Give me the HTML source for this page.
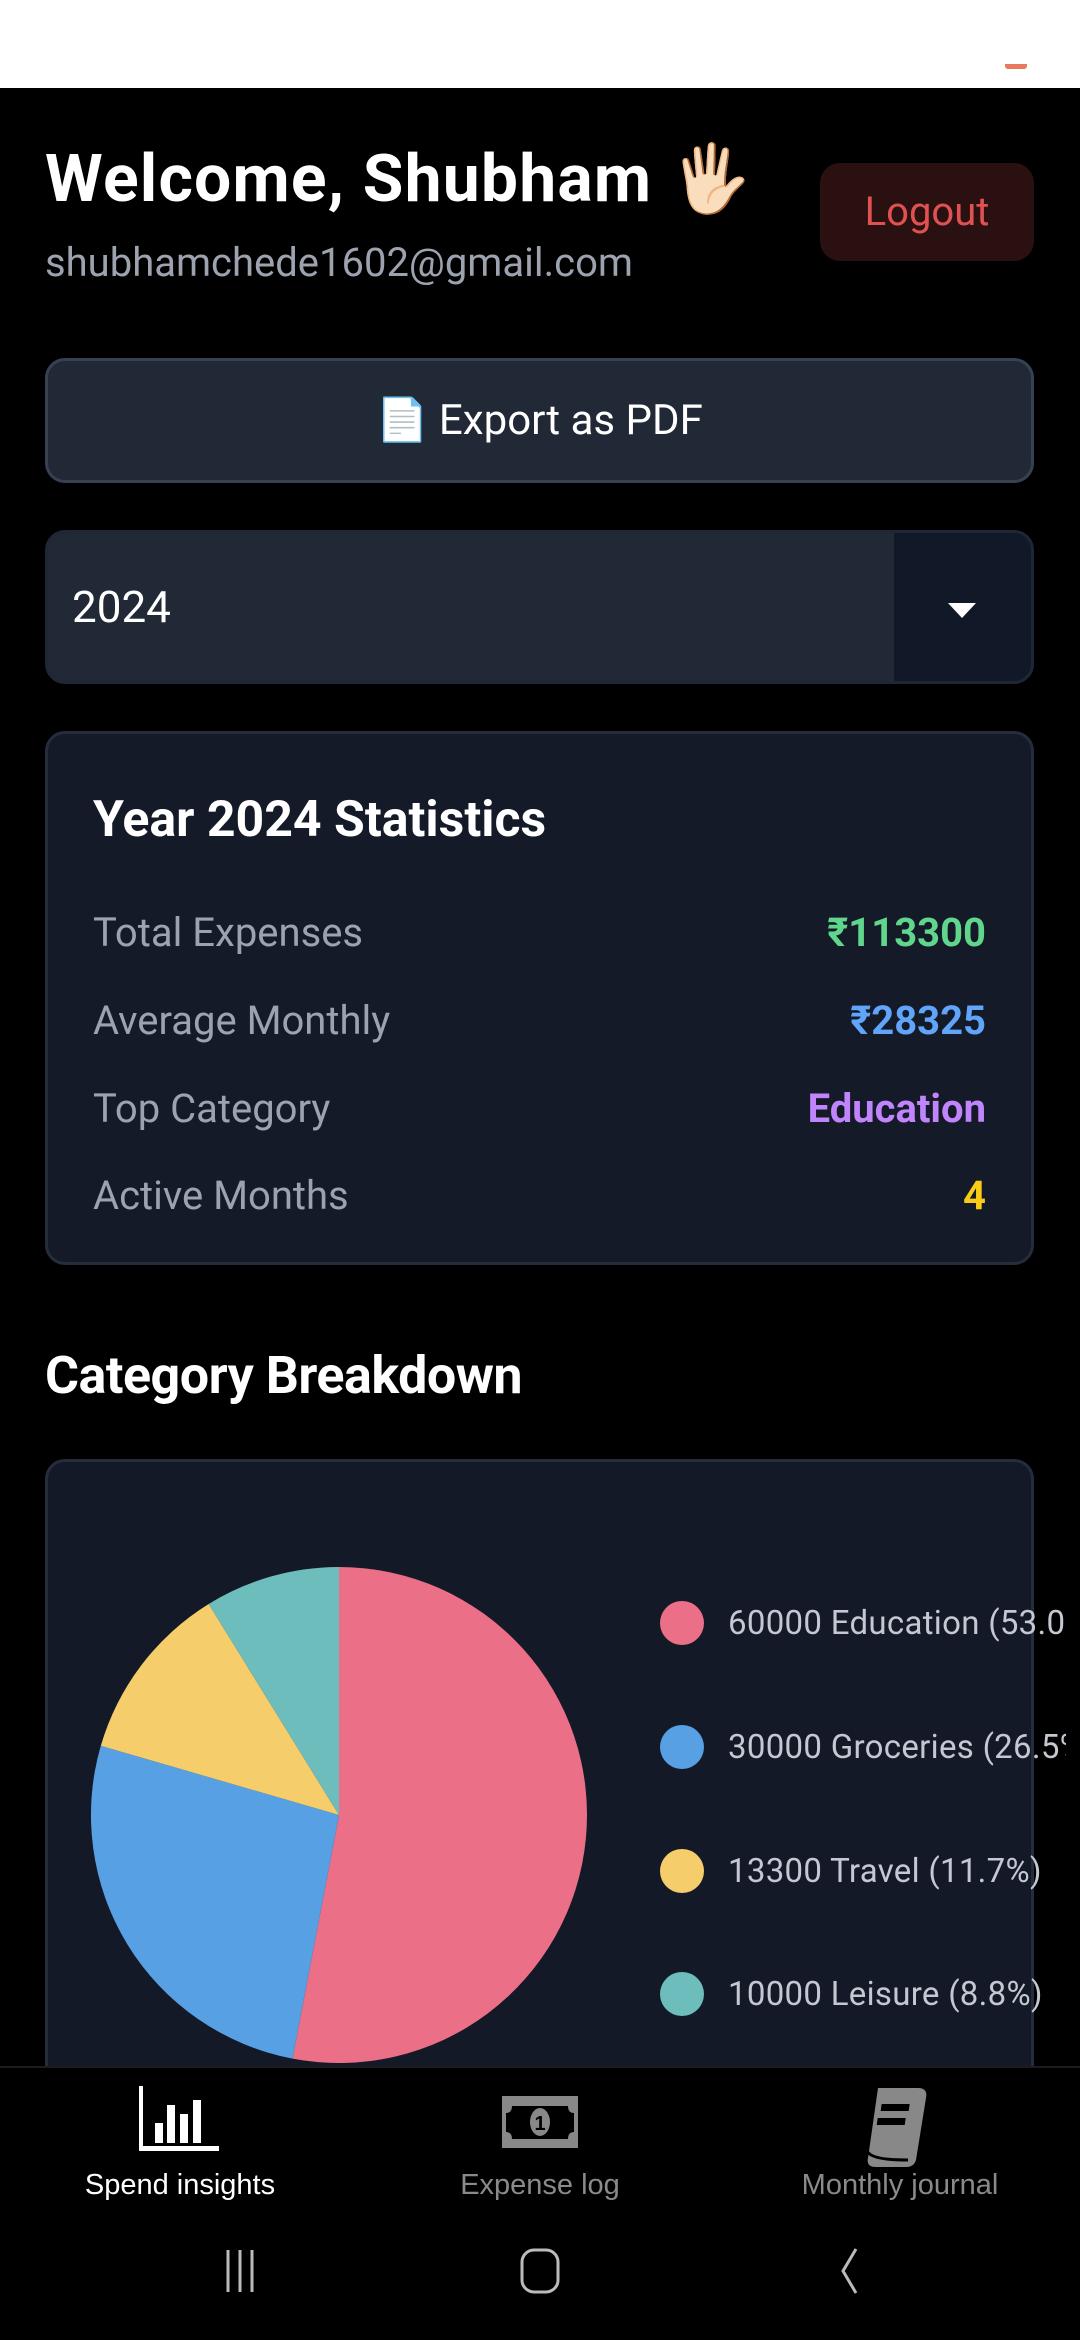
<!DOCTYPE html>
<html><head><meta charset="utf-8"><style>
*{margin:0;padding:0;box-sizing:border-box}
body{width:1080px;height:2340px;background:#000;font-family:"Roboto","Liberation Sans",sans-serif;position:relative;overflow:hidden;color:#fff}
.a{position:absolute}
</style></head><body>
<div class="a" style="left:0;top:0;width:1080px;height:88px;background:#fff"></div>
<div class="a" style="left:1005px;top:64px;width:22px;height:5px;background:#e8795a;border-radius:0 0 3px 3px"></div>

<div class="a" style="left:45px;top:140px;font-size:66px;font-weight:bold;line-height:80px;letter-spacing:1.2px">Welcome, Shubham <span style="font-family:'Noto Color Emoji',sans-serif">🖐🏻</span></div>
<div class="a" style="left:45px;top:238px;font-size:40px;color:#9ca3af;line-height:50px">shubhamchede1602@gmail.com</div>
<div class="a" style="left:820px;top:163px;width:214px;height:98px;background:#2a1010;border-radius:20px;color:#e05252;font-size:40px;line-height:98px;text-align:center">Logout</div>

<div class="a" style="left:45px;top:358px;width:989px;height:125px;background:#212836;border:3px solid #374151;border-radius:20px;font-size:42px;line-height:119px;text-align:center">📄 Export as PDF</div>

<div class="a" style="left:45px;top:530px;width:989px;height:154px;background:#212836;border:3px solid #1f2635;border-radius:20px;overflow:hidden">
<div class="a" style="right:0;top:0;width:137px;height:154px;background:#111827"></div>
<div class="a" style="right:55px;top:70px;width:0;height:0;border-left:14px solid transparent;border-right:14px solid transparent;border-top:15px solid #fff"></div>
<div class="a" style="left:24px;top:0;font-size:44px;line-height:148px">2024</div>
</div>

<div class="a" style="left:45px;top:731px;width:989px;height:534px;background:#151a28;border:3px solid #252c3c;border-radius:20px">
<div class="a" style="left:45px;top:56px;font-size:50px;font-weight:bold;line-height:60px">Year 2024 Statistics</div>
<div class="a" style="left:45px;top:174px;font-size:40px;color:#9ca3af;line-height:50px">Total Expenses</div>
<div class="a" style="right:45px;top:174px;font-size:40px;color:#5fd68b;font-weight:bold;line-height:50px">₹113300</div>
<div class="a" style="left:45px;top:262px;font-size:40px;color:#9ca3af;line-height:50px">Average Monthly</div>
<div class="a" style="right:45px;top:262px;font-size:40px;color:#60a5fa;font-weight:bold;line-height:50px">₹28325</div>
<div class="a" style="left:45px;top:350px;font-size:40px;color:#9ca3af;line-height:50px">Top Category</div>
<div class="a" style="right:45px;top:350px;font-size:40px;color:#c084fc;font-weight:bold;line-height:50px">Education</div>
<div class="a" style="left:45px;top:437px;font-size:40px;color:#9ca3af;line-height:50px">Active Months</div>
<div class="a" style="right:45px;top:437px;font-size:40px;color:#facc15;font-weight:bold;line-height:50px">4</div>
</div>

<div class="a" style="left:45px;top:1345px;font-size:52px;font-weight:bold;line-height:62px;letter-spacing:-0.5px">Category Breakdown</div>

<div class="a" style="left:45px;top:1459px;width:989px;height:700px;background:#141927;border:3px solid #252c3c;border-radius:20px"></div>
<svg class="a" style="left:0;top:0" width="1080" height="2066" viewBox="0 0 1080 2066">
<path d="M339 1815 L339 1567 A248 248 0 1 1 292.5 2058.6 Z" fill="#ec6f88"/>
<path d="M339 1815 L292.5 2058.6 A248 248 0 0 1 100.8 1745.8 Z" fill="#58a0e4"/>
<path d="M339 1815 L100.8 1745.8 A248 248 0 0 1 208.7 1604 Z" fill="#f6cd6b"/>
<path d="M339 1815 L208.7 1604 A248 248 0 0 1 339 1567 Z" fill="#6dbdbd"/>
<circle cx="682" cy="1623" r="22" fill="#ec6f88"/>
<circle cx="682" cy="1747" r="22" fill="#58a0e4"/>
<circle cx="682" cy="1871" r="22" fill="#f6cd6b"/>
<circle cx="682" cy="1994" r="22" fill="#6dbdbd"/>
</svg>
<div class="a" style="left:728px;top:1600px;width:338px;height:420px;overflow:hidden;font-size:33px;color:#c3c8d2;line-height:46px;white-space:nowrap;letter-spacing:0.3px">
<div class="a" style="top:1px">60000 Education (53.0%)</div>
<div class="a" style="top:125px">30000 Groceries (26.5%)</div>
<div class="a" style="top:249px">13300 Travel (11.7%)</div>
<div class="a" style="top:372px">10000 Leisure (8.8%)</div>
</div>

<div class="a" style="left:0;top:2066px;width:1080px;height:274px;background:#000;border-top:2px solid #1c1c1c"></div>
<svg class="a" style="left:0;top:2066px" width="1080" height="274" viewBox="0 0 1080 274">
<g fill="#fff"><rect x="139" y="20" width="4" height="64"/><rect x="139" y="80" width="80" height="5"/><rect x="155" y="57" width="8" height="20"/><rect x="167" y="39" width="8" height="38"/><rect x="180" y="48" width="8" height="29"/><rect x="193" y="34" width="8" height="43"/></g>
<rect x="502" y="30" width="76" height="52" fill="#888"/>
<path d="M512 40 Q512 47 506 47 V66 Q512 66 512 73 H568 Q568 66 574 66 V47 Q568 47 568 40 Z" fill="#000"/>
<ellipse cx="540" cy="56" rx="10" ry="14" fill="#888"/>
<text x="540" y="64" text-anchor="middle" font-size="20" font-weight="bold" fill="#000" font-family="Liberation Sans">1</text>
<path d="M878 22 H918 Q928 22 926 32 L916 94 Q914 101 906 101 H876 Q866 101 868 92 Z" fill="#888"/>
<rect x="887" y="38" width="28" height="7" fill="#000" transform="skewX(-8)"/>
<rect x="885" y="52" width="28" height="7" fill="#000" transform="skewX(-8)"/>
<path d="M868 86 Q872 94 908 94" stroke="#000" stroke-width="3" fill="none"/>
<text x="180" y="128" text-anchor="middle" font-size="29" fill="#fff" font-family="Liberation Sans">Spend insights</text>
<text x="540" y="128" text-anchor="middle" font-size="29" fill="#8a8a8a" font-family="Liberation Sans">Expense log</text>
<text x="900" y="128" text-anchor="middle" font-size="29" fill="#8a8a8a" font-family="Liberation Sans">Monthly journal</text>
<g stroke="#bbb" stroke-width="3" fill="none"><path d="M228 184 V226 M240 184 V226 M252 184 V226"/><rect x="522" y="184" width="36" height="42" rx="12"/><path d="M856 183 L843 205 L856 227"/></g>
</svg>
</body></html>
